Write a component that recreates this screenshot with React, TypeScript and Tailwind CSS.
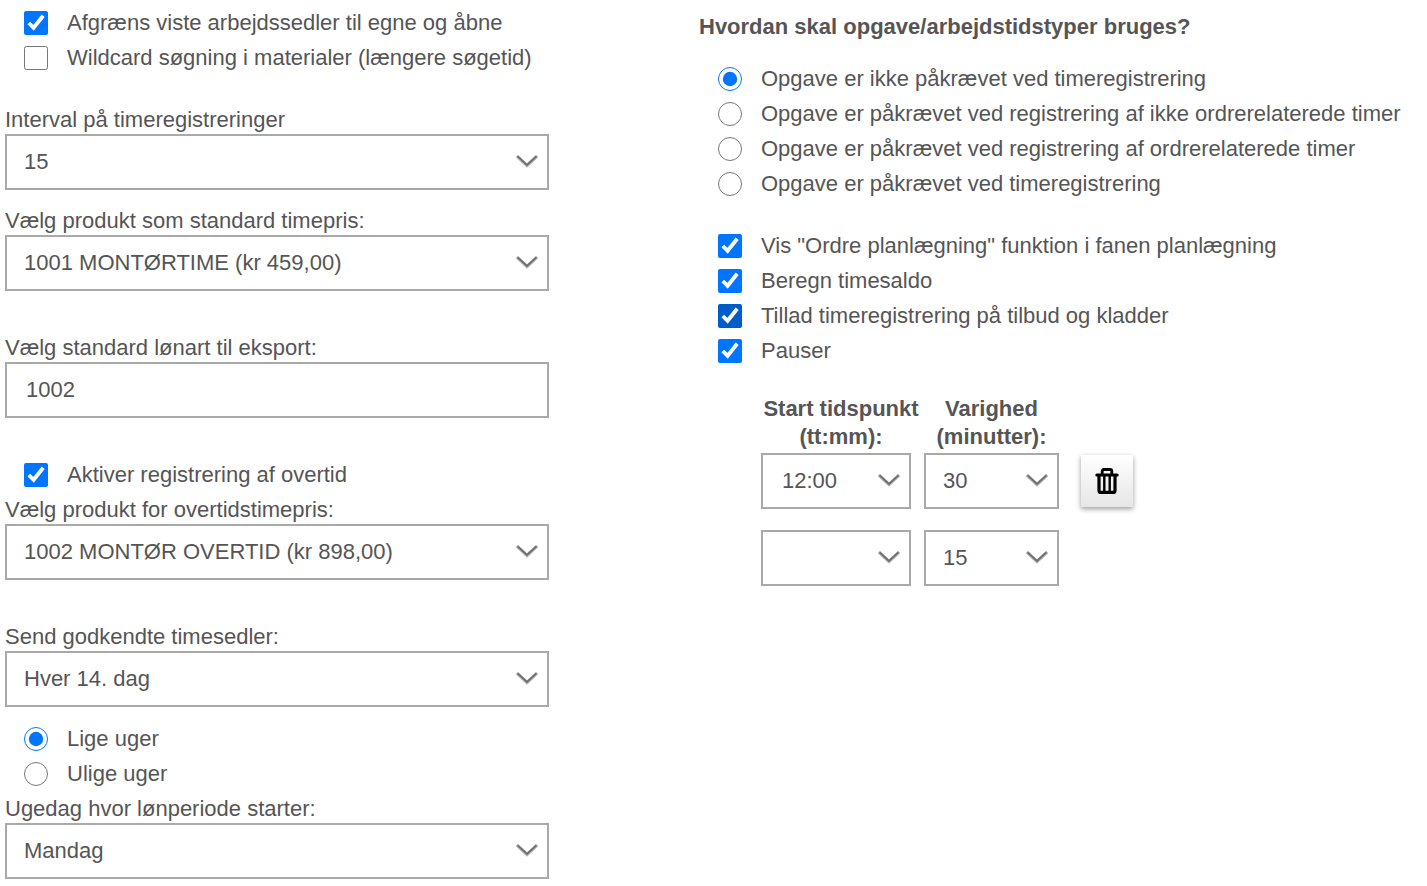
import { useState } from 'react';
import type { ReactNode } from 'react';

const TASK_MODES = [
  'Opgave er ikke påkrævet ved timeregistrering',
  'Opgave er påkrævet ved registrering af ikke ordrerelaterede timer',
  'Opgave er påkrævet ved registrering af ordrerelaterede timer',
  'Opgave er påkrævet ved timeregistrering',
];

const BOX = 'block h-14 w-full appearance-none rounded-none border-2 border-[#a9a9a9] bg-white';

function Chevron() {
  return (
    <svg className="pointer-events-none absolute top-5 right-[11px] h-[14px] w-[22px]" viewBox="0 0 22 14" fill="none" aria-hidden="true">
      <path d="M0.8 2 11 11.4 21.2 2" stroke="#b5b5b5" strokeWidth="3.4" />
      <path d="M1.6 2.4 11 11 20.4 2.4" stroke="#6e6e6e" strokeWidth="1.8" />
    </svg>
  );
}

function Select({ id, label, options }: { id?: string; label?: string; options: string[] }) {
  return (
    <div className="relative">
      <select id={id} aria-label={label} className={`${BOX} pr-10 pl-[17px]`}>
        {options.map(o => <option key={o}>{o}</option>)}
      </select>
      <Chevron />
    </div>
  );
}

function TimeInput({ label, value }: { label: string; value: string }) {
  return (
    <div className="relative w-[150px]">
      <input type="text" aria-label={label} defaultValue={value} className={`${BOX} pr-10 pl-[19px]`} />
      <Chevron />
    </div>
  );
}

function Field({ id, label, children }: { id: string; label: string; children: ReactNode }) {
  return (
    <div>
      <label htmlFor={id} className="block">{label}</label>
      {children}
    </div>
  );
}

function Check({ label, checked = false, dark = false }: { label: string; checked?: boolean; dark?: boolean }) {
  return (
    <label className="flex items-center gap-[19px] leading-6">
      <input type="checkbox" defaultChecked={checked} className={`size-6 shrink-0 ${dark ? 'accent-[#005cc8]' : 'accent-[#0075ff]'}`} />
      {label}
    </label>
  );
}

function RadioGroup({ name, options }: { name: string; options: string[] }) {
  const [selected, setSelected] = useState(options[0]);
  return (
    <div role="radiogroup" aria-label={name} className="flex flex-col gap-[11px] pl-[19px]">
      {options.map(o => (
        <label key={o} className="flex items-center gap-[19px] leading-6">
          <input type="radio" name={name} checked={selected === o} onChange={() => setSelected(o)} className="size-6 shrink-0 accent-[#0075ff]" />
          {o}
        </label>
      ))}
    </div>
  );
}

function TrashIcon() {
  return (
    <svg className="h-[26px] w-6" viewBox="0 0 24 26" fill="none" stroke="#000" aria-hidden="true">
      <path d="M7.2 6V3.4Q7.2 1.5 9 1.5H15Q16.8 1.5 16.8 3.4V6" strokeWidth="2.8" />
      <path d="M1.8 7H22.2" strokeWidth="3" strokeLinecap="round" />
      <path d="M4 8V22.4Q4 24.4 6 24.4H18Q20 24.4 20 22.4V8" strokeWidth="3.2" />
      <path d="M9.3 8V24M14.7 8V24" strokeWidth="2.4" />
    </svg>
  );
}

export default function App() {
  return (
    <main className="grid grid-cols-[544fr_728fr] gap-[150px] bg-white pl-[5px] font-['Liberation_Sans',Arial,sans-serif] text-[22px] leading-7 text-[#555]">
      <section className="pt-[11px]">
        <div className="flex flex-col gap-[11px] pl-[19px]">
          <Check label="Afgræns viste arbejdssedler til egne og åbne" checked />
          <Check label="Wildcard søgning i materialer (længere søgetid)" />
        </div>
        <div className="mt-9 flex flex-col gap-[17px]">
          <Field id="interval" label="Interval på timeregistreringer">
            <Select id="interval" options={['15', '30', '60']} />
          </Field>
          <Field id="product" label="Vælg produkt som standard timepris:">
            <Select id="product" options={['1001 MONTØRTIME (kr 459,00)']} />
          </Field>
        </div>
        <div className="mt-[43px]">
          <Field id="wage" label="Vælg standard lønart til eksport:">
            <input id="wage" type="text" defaultValue="1002" className={`${BOX} px-[19px]`} />
          </Field>
        </div>
        <div className="mt-[45px] mb-[9px] pl-[19px]">
          <Check label="Aktiver registrering af overtid" checked />
        </div>
        <Field id="overtime" label="Vælg produkt for overtidstimepris:">
          <Select id="overtime" options={['1002 MONTØR OVERTID (kr 898,00)']} />
        </Field>
        <div className="mt-[43px]">
          <Field id="send" label="Send godkendte timesedler:">
            <Select id="send" options={['Hver 14. dag', 'Hver måned']} />
          </Field>
        </div>
        <div className="mt-5 mb-[9px]">
          <RadioGroup name="Uger" options={['Lige uger', 'Ulige uger']} />
        </div>
        <Field id="weekday" label="Ugedag hvor lønperiode starter:">
          <Select id="weekday" options={['Mandag', 'Tirsdag', 'Onsdag', 'Torsdag', 'Fredag']} />
        </Field>
      </section>

      <section className="pt-[13px]">
        <h2 className="mb-[26px] font-bold">Hvordan skal opgave/arbejdstidstyper bruges?</h2>
        <RadioGroup name="Opgavetype" options={TASK_MODES} />
        <div className="mt-[38px] flex flex-col gap-[11px] pl-[19px]">
          <Check label={'Vis "Ordre planlægning" funktion i fanen planlægning'} checked />
          <Check label="Beregn timesaldo" checked />
          <Check label="Tillad timeregistrering på tilbud og kladder" checked dark />
          <Check label="Pauser" checked />
        </div>

        <table className="mt-8 ml-[62px]">
          <thead>
            <tr>
              <th className="w-40 pb-[2px]">Start tidspunkt<br />(tt:mm):</th>
              <th className="w-[138px] pb-[2px] pl-[3px]">Varighed<br />(minutter):</th>
              <td />
            </tr>
          </thead>
          <tbody>
            <tr>
              <td className="pb-[21px]"><TimeInput label="Start tidspunkt 1" value="12:00" /></td>
              <td className="pb-[21px] pl-[3px]"><Select label="Varighed 1" options={['30', '15', '45']} /></td>
              <td className="pb-[21px] pl-[22px]">
                <button type="button" aria-label="Slet pause" className="flex size-[52px] items-center justify-center bg-linear-to-b from-white to-[#e6e6e6] shadow-[0_2px_5px_rgba(0,0,0,0.4)]">
                  <TrashIcon />
                </button>
              </td>
            </tr>
            <tr>
              <td><TimeInput label="Start tidspunkt 2" value="" /></td>
              <td className="pl-[3px]"><Select label="Varighed 2" options={['15', '30', '45']} /></td>
              <td />
            </tr>
          </tbody>
        </table>
      </section>
    </main>
  );
}
